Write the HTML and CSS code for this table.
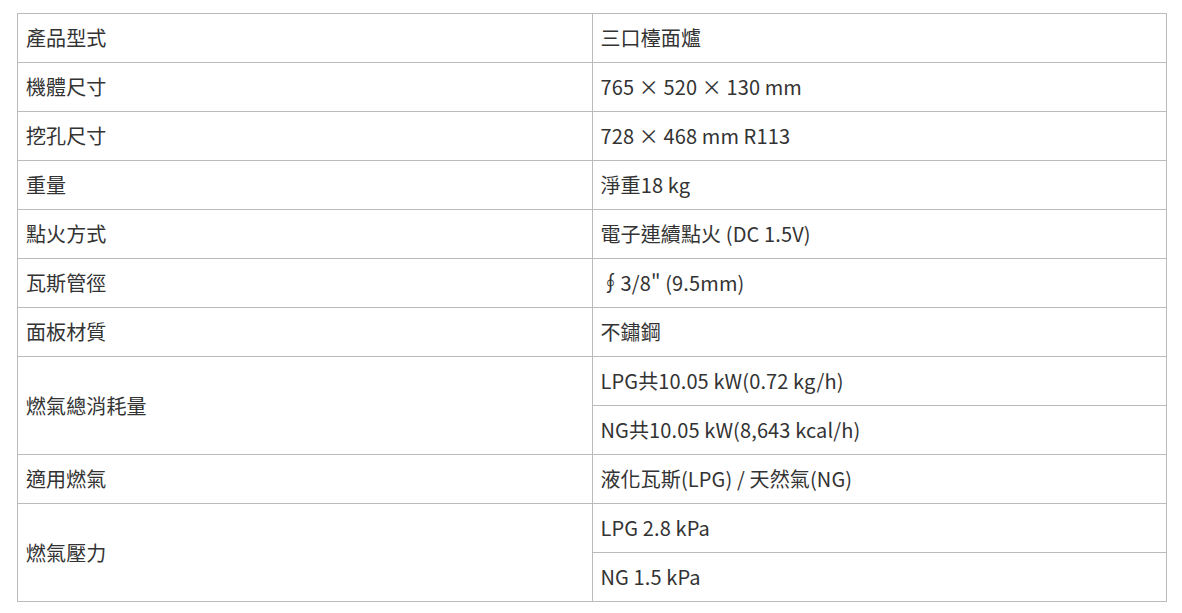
FILE: index.html
```html
<!DOCTYPE html>
<html lang="zh-Hant">
<head>
<meta charset="utf-8">
<link rel="stylesheet" href="styles.css">
</head>
<body>
<div class="wrap">
<table class="spec">
<tbody>
<tr><td>產品型式</td><td>三口檯面爐</td></tr>
<tr><td>機體尺寸</td><td>765 × 520 × 130 mm</td></tr>
<tr><td>挖孔尺寸</td><td>728 × 468 mm R113</td></tr>
<tr><td>重量</td><td>淨重18 kg</td></tr>
<tr><td>點火方式</td><td>電子連續點火 (DC 1.5V)</td></tr>
<tr><td>瓦斯管徑</td><td>∮3/8" (9.5mm)</td></tr>
<tr><td>面板材質</td><td>不鏽鋼</td></tr>
<tr><td rowspan="2">燃氣總消耗量</td><td>LPG共10.05 kW(0.72 kg/h)</td></tr>
<tr><td>NG共10.05 kW(8,643 kcal/h)</td></tr>
<tr><td>適用燃氣</td><td>液化瓦斯(LPG) / 天然氣(NG)</td></tr>
<tr><td rowspan="2">燃氣壓力</td><td>LPG 2.8 kPa</td></tr>
<tr><td>NG 1.5 kPa</td></tr>
</tbody>
</table>
</div>
</body>
</html>
```

FILE: styles.css
```css
html, body {
  margin: 0;
  padding: 0;
  background: #fff;
}
.wrap {
  padding: 13px 15px 0 17px;
}
.spec {
  width: 1150px;
  border-collapse: collapse;
  table-layout: fixed;
  font-family: "Noto Sans CJK TC", "Noto Sans", sans-serif;
  font-size: 20px;
  font-weight: 400;
  letter-spacing: 0.12px;
  color: #333;
}
.spec td {
  width: 50%;
  border: 1px solid #bbb;
  padding: 10px 8px;
  line-height: 28px;
  height: 28px;
  vertical-align: middle;
  text-align: left;
}
```
